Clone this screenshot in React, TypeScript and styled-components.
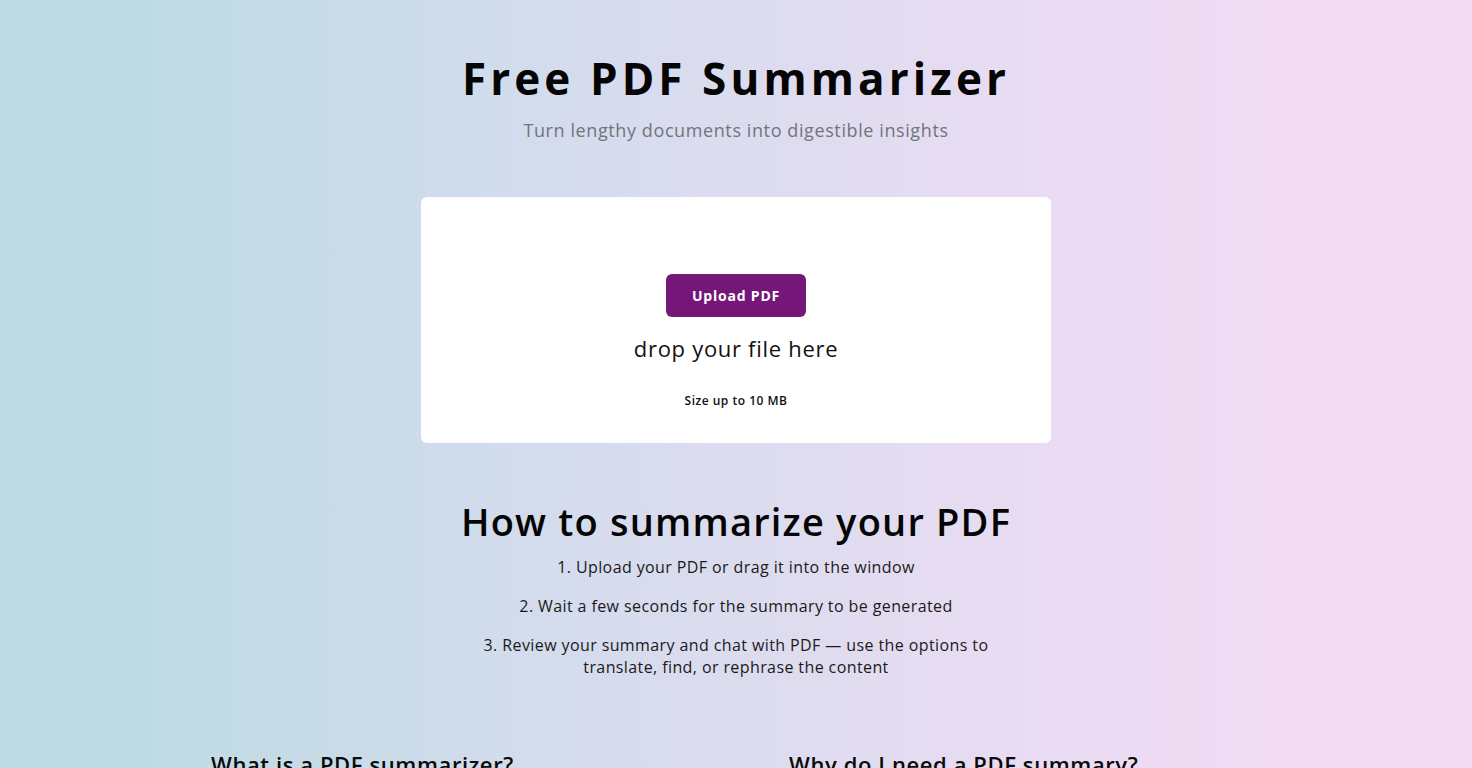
import styled, { createGlobalStyle } from "styled-components";

const GlobalStyle = createGlobalStyle`
  * {
    box-sizing: border-box;
  }
  html, body {
    margin: 0;
    padding: 0;
  }
  body {
    font-family: "Open Sans", "Liberation Sans", sans-serif;
    color: #0a0a0a;
    background: linear-gradient(90deg, #bcdbe3 7%, #d2dcec 35%, #e6dcf2 65%, #f5dcf5 93%);
    min-height: 100vh;
  }
`;

const Page = styled.main`
  display: flex;
  flex-direction: column;
  align-items: center;
  padding-top: 54px;
`;

const Title = styled.h1`
  margin: 0;
  font-size: 44px;
  line-height: 48px;
  font-weight: 700;
  letter-spacing: 4.1px;
  color: #050505;
`;

const Subtitle = styled.p`
  margin: 16px 0 0;
  font-size: 18px;
  line-height: 24px;
  font-weight: 400;
  color: #70757d;
  letter-spacing: 0.6px;
`;

const UploadCard = styled.section`
  margin-top: 55px;
  width: 630px;
  height: 246px;
  background: #fff;
  border-radius: 6px;
  display: flex;
  flex-direction: column;
  align-items: center;
  padding-top: 77px;
`;

const UploadButton = styled.button`
  width: 140px;
  height: 43px;
  border: none;
  border-radius: 6px;
  background: #741778;
  color: #fff;
  font-family: inherit;
  font-size: 14px;
  font-weight: 700;
  letter-spacing: 0.8px;
  cursor: pointer;
`;

const DropText = styled.p`
  margin: 16px 0 0;
  font-size: 22px;
  line-height: 30px;
  font-weight: 400;
  letter-spacing: 0.7px;
  color: #111;
`;

const SizeNote = styled.p`
  margin: 30px 0 0;
  font-size: 12px;
  line-height: 16px;
  font-weight: 600;
  letter-spacing: 0.5px;
  color: #111;
`;

const HowTitle = styled.h2`
  margin: 56px 0 0;
  font-size: 38px;
  line-height: 44px;
  font-weight: 600;
  letter-spacing: 1.2px;
  color: #050505;
`;

const Steps = styled.ol`
  list-style: none;
  margin: 13px 0 0;
  padding: 0;
  width: 540px;
  display: flex;
  flex-direction: column;
  gap: 17px;
`;

const Step = styled.li`
  text-align: center;
  font-size: 16px;
  line-height: 22px;
  letter-spacing: 0.4px;
  color: #1a1a1a;
`;

const Faq = styled.section`
  margin-top: 73px;
  width: 1050px;
  display: grid;
  grid-template-columns: 1fr 1fr;
  column-gap: 106px;
`;

const FaqTitle = styled.h3`
  margin: 0;
  font-size: 22px;
  line-height: 26px;
  font-weight: 600;
  letter-spacing: 0.6px;
  color: #0a0a0a;
`;

export default function App() {
  return (
    <>
      <GlobalStyle />
      <Page>
        <Title>Free PDF Summarizer</Title>
        <Subtitle>Turn lengthy documents into digestible insights</Subtitle>
        <UploadCard>
          <UploadButton>Upload PDF</UploadButton>
          <DropText>drop your file here</DropText>
          <SizeNote>Size up to 10 MB</SizeNote>
        </UploadCard>
        <HowTitle>How to summarize your PDF</HowTitle>
        <Steps>
          <Step>1. Upload your PDF or drag it into the window</Step>
          <Step>2. Wait a few seconds for the summary to be generated</Step>
          <Step>
            3. Review your summary and chat with PDF — use the options to
            translate, find, or rephrase the content
          </Step>
        </Steps>
        <Faq>
          <FaqTitle>What is a PDF summarizer?</FaqTitle>
          <FaqTitle>Why do I need a PDF summary?</FaqTitle>
        </Faq>
      </Page>
    </>
  );
}
